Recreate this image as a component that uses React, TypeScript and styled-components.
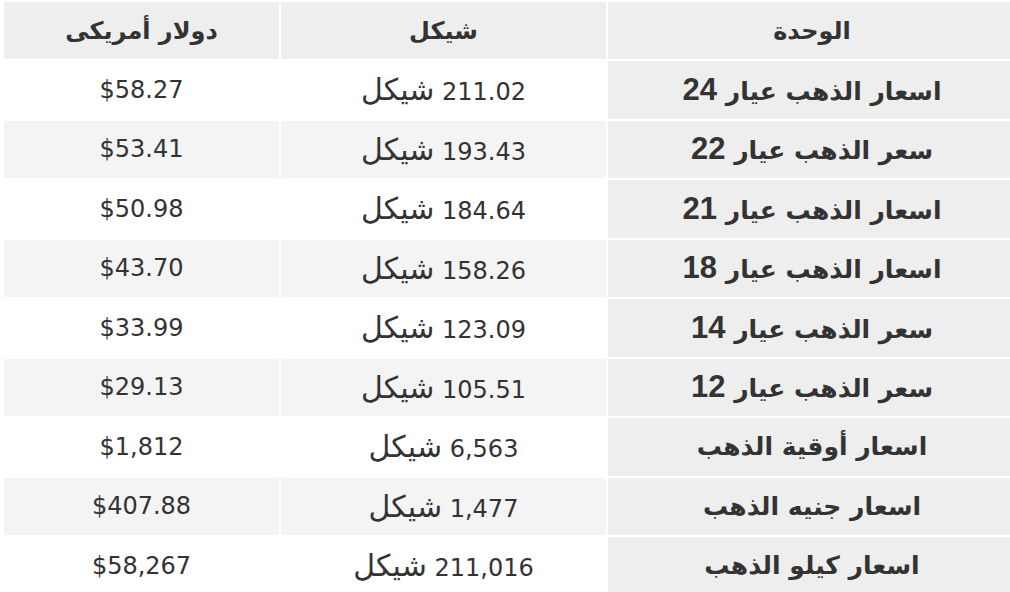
import styled, { createGlobalStyle } from 'styled-components'

const Global = createGlobalStyle`
  html, body { margin: 0; padding: 0; background: #fff; }
  body { overflow: hidden; }
`

const Wrapper = styled.div`
  width: 1024px; padding: 0 0 0 2px;
`
const Table = styled.table`
  width: 1016px; border-spacing: 2px; border-collapse: separate;
  table-layout: fixed; direction: rtl;
  font-family: "DejaVu Sans", sans-serif; color: #333;
`
const HeadCell = styled.th<{ $w: number }>`
  width: ${({ $w }) => $w}px; height: 57px; padding: 0;
  background: #eee; font-size: 24px; font-weight: bold; text-align: center;
`
const Row = styled.tr<{ $alt: boolean }>`
  background: ${({ $alt }) => ($alt ? '#f4f4f4' : '#fff')};
`
const UnitCell = styled.td`
  height: 57.5px; padding: 0; background: #eee; text-align: center;
  font-size: 25px; font-weight: bold; white-space: nowrap;
`
const Karat = styled.span`
  font-family: "Liberation Sans", sans-serif; font-size: 31px;
`
const Cell = styled.td`
  height: 57.5px; padding: 0; text-align: center; font-size: 24px;
  white-space: nowrap;
`
const Currency = styled.span`
  font-size: 30px;
`

const rows = [
  ['اسعار الذهب عيار', '24', '211.02', '$58.27'],
  ['سعر الذهب عيار', '22', '193.43', '$53.41'],
  ['اسعار الذهب عيار', '21', '184.64', '$50.98'],
  ['اسعار الذهب عيار', '18', '158.26', '$43.70'],
  ['سعر الذهب عيار', '14', '123.09', '$33.99'],
  ['سعر الذهب عيار', '12', '105.51', '$29.13'],
  ['اسعار أوقية الذهب', '', '6,563', '$1,812'],
  ['اسعار جنيه الذهب', '', '1,477', '$407.88'],
  ['اسعار كيلو الذهب', '', '211,016', '$58,267'],
]

export default function App() {
  return (
    <Wrapper>
      <Global />
      <Table>
        <thead>
          <tr>
            <HeadCell $w={408}>الوحدة</HeadCell>
            <HeadCell $w={325}>شيكل</HeadCell>
            <HeadCell $w={275}>دولار أمريكى</HeadCell>
          </tr>
        </thead>
        <tbody>
          {rows.map((r, i) => (
            <Row key={i} $alt={i % 2 === 1}>
              <UnitCell>
                {r[0]}
                {r[1] && <> <Karat>{r[1]}</Karat></>}
              </UnitCell>
              <Cell>{r[2]} <Currency>شيكل</Currency></Cell>
              <Cell dir="ltr">{r[3]}</Cell>
            </Row>
          ))}
        </tbody>
      </Table>
    </Wrapper>
  )
}
